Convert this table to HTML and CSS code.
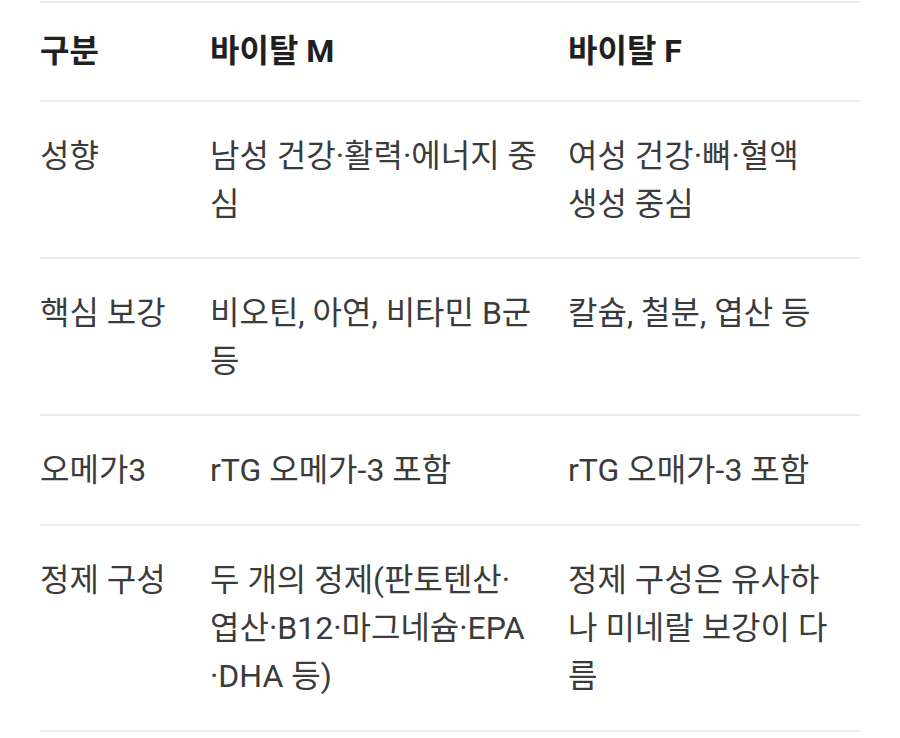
FILE: index.html
```html
<!DOCTYPE html>
<html lang="ko">
<head>
<meta charset="utf-8">
<link rel="stylesheet" href="styles.css">
</head>
<body>
<table class="cmp">
  <colgroup>
    <col class="c1">
    <col class="c2">
    <col class="c3">
  </colgroup>
  <thead>
    <tr>
      <th>구분</th>
      <th>바이탈 M</th>
      <th>바이탈 F</th>
    </tr>
  </thead>
  <tbody>
    <tr>
      <td>성향</td>
      <td>남성 건강·활력·에너지 중심</td>
      <td>여성 건강·뼈·혈액 생성 중심</td>
    </tr>
    <tr>
      <td>핵심 보강</td>
      <td>비오틴, 아연, 비타민 B군 등</td>
      <td>칼슘, 철분, 엽산 등</td>
    </tr>
    <tr>
      <td>오메가3</td>
      <td>rTG 오메가-3 포함</td>
      <td>rTG 오매가-3 포함</td>
    </tr>
    <tr>
      <td>정제 구성</td>
      <td>두 개의 정제(판토텐산·<br>엽산·B12·마그네슘·EPA<wbr>·DHA 등)</td>
      <td>정제 구성은 유사하나 미네랄 보강이 다름</td>
    </tr>
  </tbody>
</table>
</body>
</html>
```
FILE: styles.css
```css
html, body {
  margin: 0;
  padding: 0;
  background: #ffffff;
}

body {
  font-family: Roboto, "Noto Sans CJK KR", sans-serif;
  color: #3b3b3b;
}

.cmp {
  margin: 1px 0 0 40px;
  width: 820px;
  border-collapse: collapse;
  table-layout: fixed;
  border-top: 2px solid #ebebeb;
}

.c1 { width: 170px; }
.c2 { width: 358px; }
.c3 { width: 292px; }

.cmp th,
.cmp td {
  text-align: left;
  vertical-align: top;
  font-size: 32px;
  line-height: 48px;
  border-bottom: 2px solid #ebebeb;
  padding: 30px 22px 30px 0;
}

.cmp th:last-child,
.cmp td:last-child {
  padding-right: 30px;
}

.cmp th {
  font-weight: 700;
  color: #202020;
  padding-top: 24px;
  padding-bottom: 25px;
}

.cmp tbody tr:nth-child(1) td,
.cmp tbody tr:nth-child(2) td {
  padding-bottom: 29px;
}
```
